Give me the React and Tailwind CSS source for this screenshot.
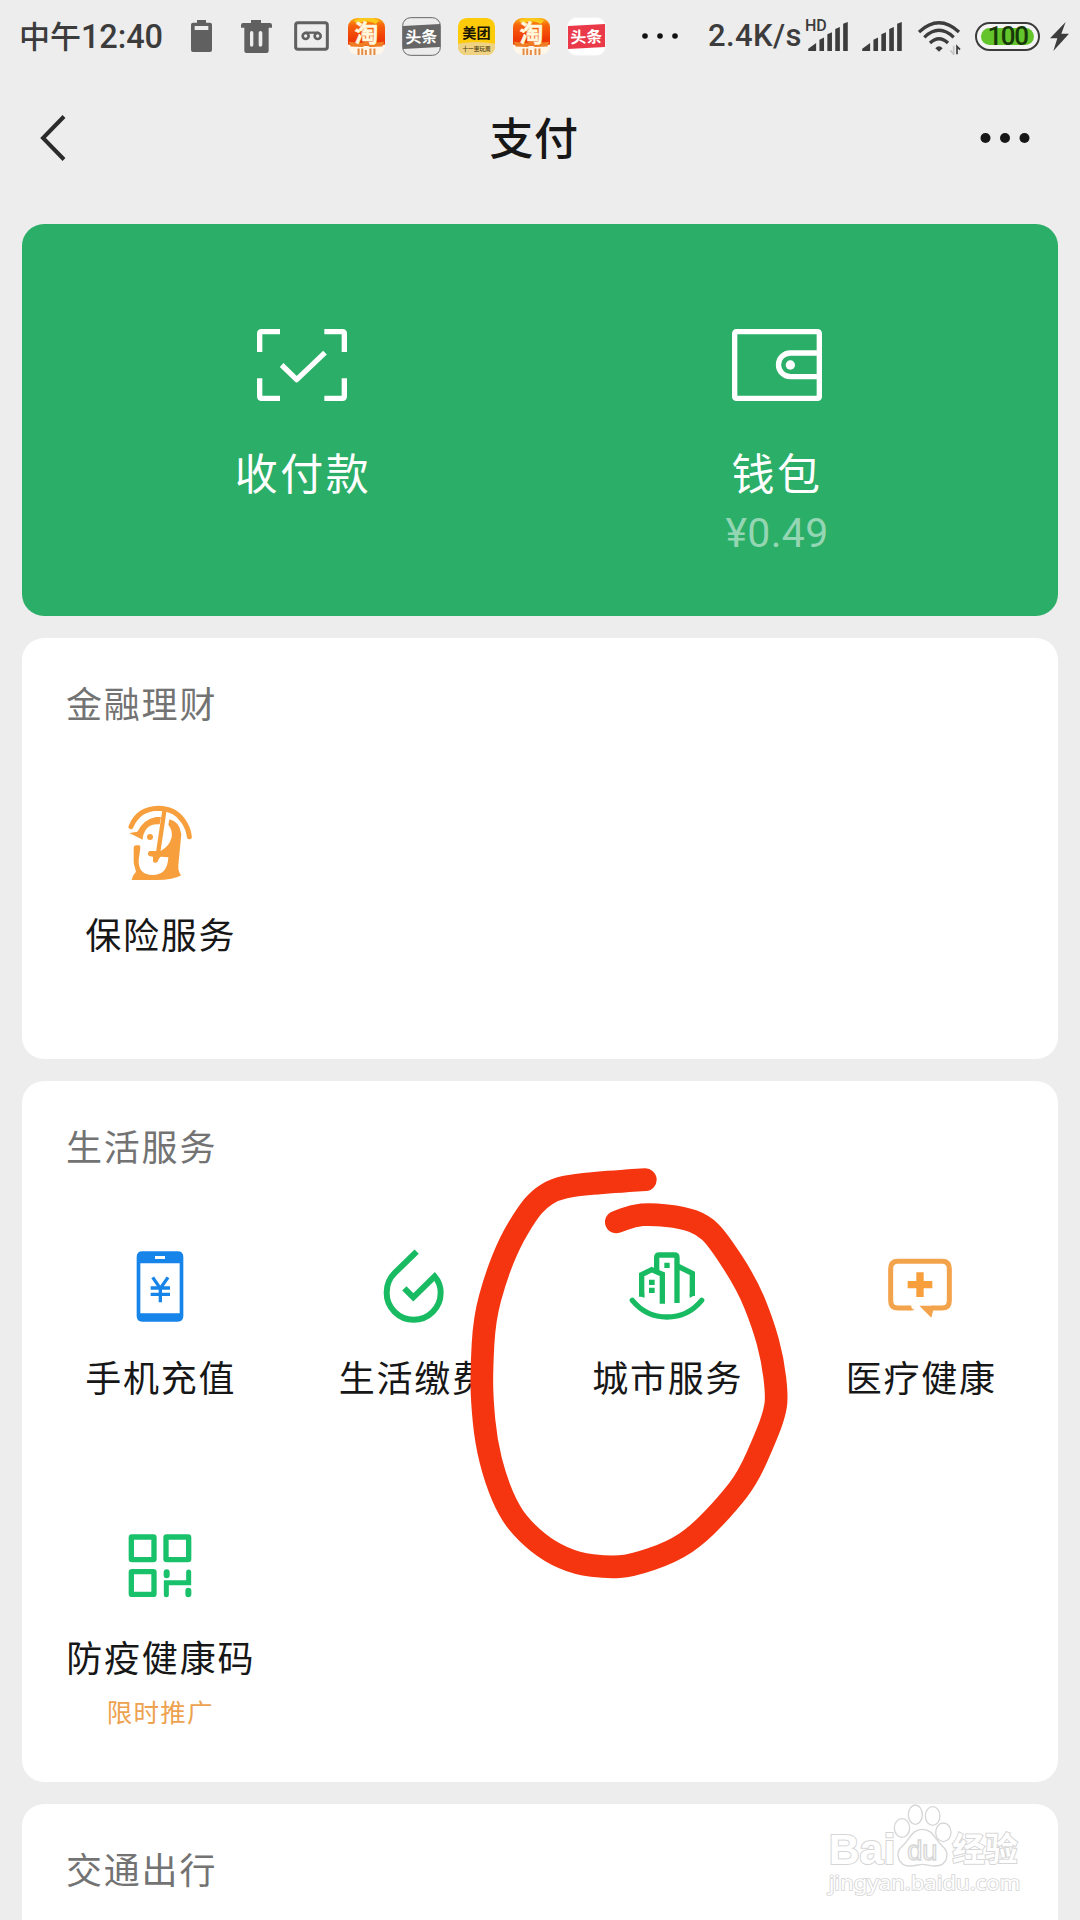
import React from 'react';

const TaobaoIcon = ({ id }) => (
  <svg viewBox="0 0 112 112" className="w-[37px] h-[37px]">
    <defs>
      <linearGradient id={id} x1="0" y1="0" x2="0" y2="1">
        <stop offset="0" stopColor="#f9b414" />
        <stop offset="0.25" stopColor="#f8640c" />
        <stop offset="0.75" stopColor="#ee3a05" />
      </linearGradient>
    </defs>
    <rect width="112" height="112" rx="28" fill="#fff6ea" />
    <path d="M0 80V28A28 28 0 0 1 28 0H84A28 28 0 0 1 112 28V80Q84 88 56 84Q28 88 0 80Z" fill={`url(#${id})`} />
    <path d="M18 8Q56-12 94 8L84 18Q56 2 28 18Z" fill="#fbc81c" />
    <path d="M2 72L40 76L56 70L74 76L110 72L104 86L66 88L56 82L44 88L8 86Z" fill="#ef7c22" />
    <text x="56" y="74" textAnchor="middle" fontSize="72" fontWeight="700" fill="#fff8dc" stroke="#fff8dc" strokeWidth="1.500">淘</text>
    <path d="M32 92V112M43 92V112M54 97V112M68 92V112M80 92V112" stroke="#e58a41" strokeWidth="6" />
  </svg>
);

const ToutiaoIcon = ({ color, outline }) => (
  <svg viewBox="0 0 117 117" className="w-[39px] h-[39px]">
    <rect x="2" y="2" width="113" height="113" rx="24" fill={outline ? '#ececec' : '#fff'} stroke={outline ? '#666' : '#f4f4f4'} strokeWidth="3" />
    <path d="M3 27L114 21V90L3 96Z" fill={color} />
    <text x="58" y="77" textAnchor="middle" fontSize="48" fontWeight="700" fill="#fff" transform="rotate(-2 58 58)">头条</text>
  </svg>
);

const MeituanIcon = () => (
  <svg viewBox="0 0 112 112" className="w-[37px] h-[37px]">
    <rect width="112" height="112" rx="26" fill="#fdcb0a" />
    <path d="M0 78Q56 68 112 78V86A26 26 0 0 1 86 112H26A26 26 0 0 1 0 86Z" fill="#f0d283" />
    <text x="56" y="61" textAnchor="middle" fontSize="43" fontWeight="700" fill="#1a1500">美团</text>
    <text x="56" y="99" textAnchor="middle" fontSize="17" fontWeight="500" fill="#4a3a10">十一惠玩周</text>
  </svg>
);

const Signal = () => (
  <svg viewBox="0 0 120 88" className="w-[40px] h-[29px]" fill="#3c3c3c">
    <path d="M0 88V81L24 64V88ZM34 88V54L48 47V88ZM58 88V37L72 31V88ZM82 88V21L96 15V88ZM106 88V5L120 0V88Z" />
  </svg>
);

const StatusBar = () => (
  <div className="h-[72px] flex items-center pl-[19px] text-[#3c3c3c]">
    <div className="w-[172px] flex items-baseline text-[31px] font-medium whitespace-nowrap leading-[44px]">
      <span>中午</span>
      <span className="text-[32.500px] font-['Roboto'] tracking-[-0.1px]">12:40</span>
    </div>
    <svg viewBox="0 0 63 96" className="w-[21px] h-[32px]" fill="#606060">
      <path fillRule="evenodd" d="M18 0H45V8H57Q63 8 63 14V90Q63 96 57 96H6Q0 96 0 90V14Q0 8 6 8H18ZM11 18V30H52V18Z" />
    </svg>
    <svg viewBox="0 0 93 99" className="w-[31px] h-[33px] ml-[29px]" fill="#606060">
      <path fillRule="evenodd" d="M30 0H60V9H87Q93 9 93 16V23H83V93Q83 99 77 99H16Q10 99 10 93V23H0V16Q0 9 6 9H30ZM32 33Q27 33 27 38V75Q27 80 32 80T37 75V38Q37 33 32 33ZM58 33Q53 33 53 38V75Q53 80 58 80T64 75V38Q64 33 58 33Z" />
    </svg>
    <svg viewBox="0 0 105 90" className="w-[35px] h-[30px] ml-[22px]" fill="none" stroke="#606060">
      <rect x="5" y="5" width="95" height="80" rx="7" strokeWidth="9" />
      <circle cx="35" cy="45" r="9" strokeWidth="8" />
      <circle cx="71" cy="45" r="9" strokeWidth="8" />
      <path d="M32 35H74" strokeWidth="7" />
    </svg>
    <div className="ml-[19px] flex items-center">
      <TaobaoIcon id="tb1" />
      <div className="ml-[17px] flex"><ToutiaoIcon color="#666" outline /></div>
      <div className="ml-[17px] flex"><MeituanIcon /></div>
      <div className="ml-[18px] flex"><TaobaoIcon id="tb2" /></div>
      <div className="ml-[17px] flex"><ToutiaoIcon color="#ea3a4a" /></div>
    </div>
    <svg viewBox="0 0 36 6" className="w-[36px] h-[6px] ml-[36px]" fill="#111">
      <circle cx="3" cy="3" r="2.8" />
      <circle cx="18" cy="3" r="2.8" />
      <circle cx="33" cy="3" r="2.8" />
    </svg>
    <span className="ml-[30px] w-[100px] text-[31px] font-medium font-['Roboto'] tracking-[0.4px] whitespace-nowrap">2.4K/s</span>
    <div className="relative flex">
      <Signal />
      <span className="absolute left-[-3px] top-[-4px] text-[16px] leading-[16px] font-medium font-['Roboto']">HD</span>
    </div>
    <div className="ml-[14px] flex"><Signal /></div>
    <svg viewBox="0 0 129 102" className="w-[43px] h-[34px] ml-[16px] mt-[4px]" fill="none" stroke="#3c3c3c" strokeWidth="10">
      <path d="M3 33Q63-22 123 33" />
      <path d="M19 49Q63 7 107 49" />
      <path d="M36 66Q63 40 90 66" />
      <path d="M52 82Q63 70 74 82L63 92Z" fill="#3c3c3c" stroke="none" />
      <path d="M107 74V100L97 88" stroke="#c4c4c4" strokeWidth="5" />
      <path d="M117 100V76L126 86" strokeWidth="5" />
    </svg>
    <div className="ml-[14px] w-[65px] h-[29px] rounded-full border-2 border-[#3c3c3c] p-[4px] bg-[#f4f4f4]">
      <div className="w-full h-full rounded-full bg-[#63c52b] flex items-center justify-center text-[#17380a] text-[26px] leading-none font-medium font-['Roboto'] tracking-[-1.500px]">100</div>
    </div>
    <svg viewBox="0 0 57 87" className="w-[19px] h-[29px] ml-[10px]" fill="#3c3c3c">
      <path d="M47 0L0 49H22L10 87L57 35H34Z" />
    </svg>
  </div>
);

const NavBar = () => (
  <div className="h-[130px] flex items-center justify-between pl-[40px] pr-[50px] pt-px">
    <svg viewBox="0 0 26 48" className="w-[26px] h-[48px]" fill="none" stroke="#2b2b2b" strokeWidth="4">
      <path d="M24 2.500L3 24L24 45.500" />
    </svg>
    <h1 className="ml-[22px] -mt-[3px] text-[44px] leading-[60px] tracking-[0.500px] font-medium text-[#171717]">支付</h1>
    <svg viewBox="0 0 50 10" className="w-[50px] h-[10px]" fill="#171717">
      <circle cx="5.500" cy="5" r="5" />
      <circle cx="25" cy="5" r="5" />
      <circle cx="44.500" cy="5" r="5" />
    </svg>
  </div>
);

const PayCard = () => (
  <div className="h-[392px] rounded-[22px] bg-[#2bae67] grid grid-cols-2 pl-[42px] pt-[105px] text-white">
    <div className="flex flex-col items-center pr-[21px]">
      <svg viewBox="0 0 270 216" className="w-[90px] h-[72px]" fill="none" stroke="#fff" strokeWidth="16">
        <path d="M8 69V14Q8 8 14 8H69M202 8H256Q262 8 262 14V69M262 148V202Q262 208 256 208H202M69 208H14Q8 208 8 202V148" />
        <path d="M74 108L119 152L204 71" strokeLinejoin="round" />
      </svg>
      <span className="mt-[38px] pl-[2px] text-[43px] leading-[64px] tracking-[2.500px]">收付款</span>
    </div>
    <div className="flex flex-col items-center pr-[65px]">
      <svg viewBox="0 0 270 216" className="w-[90px] h-[72px]" fill="none" stroke="#fff" strokeWidth="16">
        <rect x="8" y="8" width="254" height="200" rx="5" />
        <path d="M262 72H175A35 35 0 0 0 175 143H262" />
        <circle cx="175" cy="108" r="14" fill="#fff" stroke="none" />
      </svg>
      <span className="mt-[38px] text-[43px] leading-[64px] tracking-[2.500px]">钱包</span>
      <span className="mt-[6px] text-[41px] leading-[48px] font-['Roboto'] tracking-[0.300px] text-[#94d6b3]">¥0.49</span>
    </div>
  </div>
);

const InsuranceIcon = () => (
  <svg viewBox="213 435 234 234" className="w-[78px] h-[78px]" fill="#f79f3c">
    <path d="M243 500Q265 446 325 445Q375 446 400 483Q416 507 418 530" fill="none" stroke="#f79f3c" strokeWidth="15" strokeLinecap="round" />
    <path fillRule="evenodd" d="M238 519L262 515Q281 478 318 471L333 471L329 493Q300 491 289 507Q279 520 278 539Z" />
    <circle cx="300" cy="531" r="9" />
    <path d="M343 453L324 581" stroke="#f79f3c" strokeWidth="13" fill="none" />
    <path d="M358 478Q388 484 394 522L385 615Q384 638 394 646Q370 660 320 660H245Q248 645 258 635L251 608V564Q251 556 259 556H266Q272 556 271 563L266 600Q264 644 308 645Q353 645 355 592L332 590Q325 595 324 603Q322 609 315 608Q309 608 309 602V590L297 588Q290 580 298 573H332Q358 560 365 532Q368 508 355 495Z" />
  </svg>
);

const PhoneIcon = () => (
  <svg viewBox="213 414 234 234" className="w-[78px] h-[78px]">
    <path fillRule="evenodd" fill="#1784ea" d="M277 424H383Q400 424 400 441V618Q400 635 383 635H277Q260 635 260 618V441Q260 424 277 424ZM271 460V610H389V460ZM315 438V447H345V438Z" />
    <path d="M308 502L331 535L354 502M331 532V577M302 534H360M302 553H360" fill="none" stroke="#1784ea" strokeWidth="10" />
  </svg>
);

const DropIcon = () => (
  <svg viewBox="973 414 234 234" className="w-[78px] h-[78px]" fill="none" stroke="#19bb62" strokeWidth="18">
    <path d="M1101 425L1036 488Q1011 512 1011 548A81 81 0 0 0 1173 548Q1173 520 1155 499L1091 562L1064 535" />
  </svg>
);

const CityIcon = () => (
  <svg viewBox="204 84 234 234" className="w-[78px] h-[78px]" fill="none" stroke="#19bb62" strokeWidth="16">
    <path d="M217 241Q258 291 321 291T425 241" strokeLinecap="round" />
    <path d="M245 230V164L275 149L307 163V251" />
    <path d="M290 155V113Q290 105 298 105H343Q351 105 351 113V249" />
    <path d="M352 138L397 160V228" />
    <path d="M389 223V234L405 225V215ZM237 215V226L253 234V220Z" fill="#19bb62" stroke="none" />
    <path d="M313 128H329V144H313ZM267 179H284V195H267ZM267 203H284V219H267Z" fill="#19bb62" stroke="none" />
  </svg>
);

const MedicalIcon = () => (
  <svg viewBox="963 84 234 234" className="w-[78px] h-[78px]" fill="none" stroke="#f3a34b" strokeWidth="15">
    <path d="M1054 264H1014Q992 264 992 242V146Q992 124 1014 124H1146Q1168 124 1168 146V242Q1168 264 1146 264H1115" />
    <path d="M1080 157V231M1043 194H1117" stroke="#f79f3c" strokeWidth="22" />
    <path d="M1078 257H1123L1114 293ZM1046 257L1064 271H1046Z" fill="#f3a34b" stroke="none" />
  </svg>
);

const HealthCodeIcon = () => (
  <svg viewBox="243 84 234 234" className="w-[78px] h-[78px]" fill="none" stroke="#19c16b" strokeWidth="16">
    <rect x="274" y="111" width="68" height="68" rx="2" />
    <rect x="378" y="111" width="68" height="68" rx="2" />
    <rect x="274" y="215" width="68" height="68" rx="2" />
    <path d="M379 284V248H446V216" strokeLinecap="round" strokeWidth="15" />
    <path d="M380 217V226M445 272V283" strokeLinecap="round" strokeWidth="18" />
  </svg>
);

const Section = ({ title, items = [], className = '' }) => (
  <section className={`mt-[22px] rounded-[22px] bg-white px-[11px] ${className}`}>
    <h2 className="pl-[33px] pt-[36px] h-[167px] text-[36px] leading-[56px] tracking-[1.800px] text-[#737373]">{title}</h2>
    <div className="grid grid-cols-4 auto-rows-[280px]">
      {items.map(({ label, icon: Icon, note }) => (
        <div key={label} className="flex flex-col items-center whitespace-nowrap">
          <Icon />
          <span className="mt-[22px] pl-[2px] text-[36px] leading-[56px] tracking-[1.800px] text-[#171717]">{label}</span>
          {note && <span className="mt-[9px] pl-px text-[25.500px] leading-[36px] tracking-[1.300px] text-[#eda24f]">{note}</span>}
        </div>
      ))}
    </div>
  </section>
);

const finance = [{ label: '保险服务', icon: InsuranceIcon }];

const life = [
  { label: '手机充值', icon: PhoneIcon },
  { label: '生活缴费', icon: DropIcon },
  { label: '城市服务', icon: CityIcon },
  { label: '医疗健康', icon: MedicalIcon },
  { label: '防疫健康码', icon: HealthCodeIcon, note: '限时推广' },
];

const markerPoints = [
  [556, 89], [450, 96], [345, 105], [284, 118], [236, 148], [200, 192], [150, 275], [107, 382],
  [73, 507], [65, 660], [66, 748], [78, 875], [107, 990], [149, 1087], [199, 1149], [269, 1205],
  [350, 1241], [443, 1252], [513, 1248], [636, 1206], [718, 1151], [804, 1059], [864, 982],
  [919, 857], [943, 792], [951, 740], [938, 628], [909, 522], [861, 403], [772, 266], [729, 225],
  [669, 202], [572, 192], [520, 197], [469, 216],
];

const toPath = (pts) => {
  let d = `M${pts[0]}`;
  for (let i = 1; i < pts.length - 1; i++) {
    const [x, y] = pts[i];
    const [nx, ny] = pts[i + 1];
    d += `Q${x} ${y} ${(x + nx) / 2} ${(y + ny) / 2}`;
  }
  return `${d}L${pts[pts.length - 1]}`;
};

const Marker = () => (
  <svg viewBox="0 0 1020 1320" className="absolute left-[460px] top-[1150px] w-[340px] h-[440px]" fill="none" stroke="#f5350f" strokeWidth="68" strokeLinecap="round" strokeLinejoin="round">
    <path d={toPath(markerPoints)} />
  </svg>
);

const Watermark = () => (
  <svg viewBox="0 0 600 300" className="absolute left-[820px] top-[1800px] w-[200px] h-[100px]" fill="#fff" stroke="#d6d6d6" strokeWidth="6">
    <text x="26" y="192" fontFamily="Liberation Sans" fontWeight="700" fontSize="126" textLength="200" lengthAdjust="spacingAndGlyphs" paintOrder="stroke">Bai</text>
    <g strokeWidth="4">
      <ellipse cx="246" cy="84" rx="23" ry="28" />
      <ellipse cx="286" cy="44" rx="21" ry="29" />
      <ellipse cx="338" cy="48" rx="22" ry="28" />
      <ellipse cx="370" cy="97" rx="23" ry="28" />
      <path d="M307 88C275 88 270 118 247 138C222 160 235 198 270 198C290 198 295 193 307 193S330 198 345 198C382 198 392 160 367 138C344 118 340 88 307 88Z" />
    </g>
    <text x="307" y="181" textAnchor="middle" fontFamily="Liberation Sans" fontSize="82" strokeWidth="4">du</text>
    <text x="397" y="183" fontSize="98" fontWeight="700" textLength="196" paintOrder="stroke">经验</text>
    <text x="26" y="270" fontFamily="Noto Sans" fontSize="60" strokeWidth="5" textLength="575" lengthAdjust="spacingAndGlyphs" paintOrder="stroke">jingyan.baidu.com</text>
  </svg>
);

export default function App() {
  return (
    <div className="relative w-[1080px] h-[1920px] overflow-hidden bg-[#ededed] font-['Noto_Sans_CJK_SC',sans-serif]">
      <StatusBar />
      <NavBar />
      <main className="px-[22px] pt-[22px]">
        <PayCard />
        <Section title="金融理财" items={finance} className="h-[421px]" />
        <Section title="生活服务" items={life} className="h-[701px]" />
        <Section title="交通出行" className="h-[200px]" />
      </main>
      <Marker />
      <Watermark />
    </div>
  );
}
